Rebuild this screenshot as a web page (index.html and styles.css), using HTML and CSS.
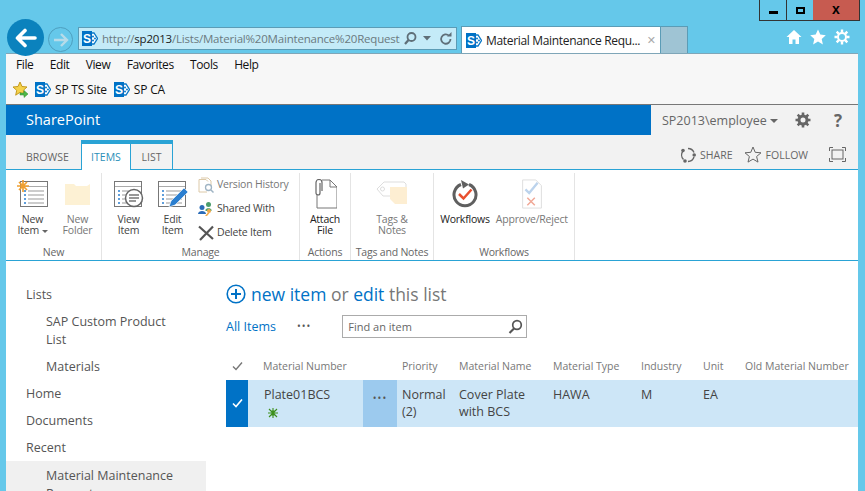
FILE: index.html
```html
<!DOCTYPE html>
<html lang="en">
<head>
    <meta charset="UTF-8">
    <meta name="viewport" content="width=device-width, initial-scale=1.0">
    <title>Material Maintenance Requests</title>
    <link rel="stylesheet" href="styles.css">
</head>
<body>
    <svg class="defs" width="0" height="0">
        <symbol id="sp" viewBox="0 0 16 17">
            <path d="M9 3h3l3.500 5.500L12 14H9z" fill="#fff" stroke="#0a78c8" stroke-width="1.300"/>
            <circle cx="11" cy="6.500" r="1" fill="#0a78c8"/><circle cx="13" cy="8.500" r="1" fill="#0a78c8"/><circle cx="11" cy="10.500" r="1" fill="#0a78c8"/>
            <rect x="0" y="1" width="10" height="15" fill="#0072c6"/>
            <text x="5" y="13" text-anchor="middle" font-family="Liberation Sans" font-weight="700" font-size="12" fill="#fff">S</text>
        </symbol>
        <symbol id="listdoc" viewBox="0 0 30 28">
            <rect x="1.500" y="1.500" width="27" height="25" fill="#fff" stroke="#777"/>
            <path d="M2 6.500h26" stroke="#aaa"/>
            <path d="M5 11h2M5 15h2M5 19h2M5 23h2" stroke="#2b7fd0" stroke-width="1.500"/>
            <path d="M9 11h16M9 15h16M9 19h16M9 23h16" stroke="#999"/>
        </symbol>
    </svg>

    <div class="window">
        <div class="titlebar">
            <div class="wincontrols">
                <div class="winbtn min"><span></span></div>
                <div class="winbtn max"><span></span></div>
                <div class="winbtn close">x</div>
            </div>
        </div>

        <div class="navbar">
            <div class="back">
                <svg width="24" height="20" viewBox="0 0 24 20"><path d="M21 10H4M11 2.500 3.500 10l7.500 7.500" fill="none" stroke="#fff" stroke-width="3.600" stroke-linecap="round" stroke-linejoin="round"/></svg>
            </div>
            <div class="forward">
                <svg width="16" height="14" viewBox="0 0 16 14"><path d="M1 7h13M8 1l6 6-6 6" fill="none" stroke="#b6dbe9" stroke-width="2.400"/></svg>
            </div>
            <div class="address">
                <svg class="favicon" width="16" height="17"><use href="#sp"/></svg>
                <div class="url">http://<b>sp2013</b>/Lists/Material%20Maintenance%20Requests/AllItems.aspx</div>
                <svg width="15" height="15" viewBox="0 0 15 15"><circle cx="8.500" cy="6" r="4" fill="none" stroke="#5f6f78" stroke-width="1.800"/><path d="M5.500 9 2 13" stroke="#5f6f78" stroke-width="2.200"/></svg>
                <svg class="caret" width="8" height="5" viewBox="0 0 8 5"><path d="M0 0h8L4 4.500z" fill="#5f6f78"/></svg>
                <svg width="14" height="14" viewBox="0 0 14 14"><path d="M11.500 7a4.700 4.700 0 1 1-1.500-3.400" fill="none" stroke="#5f6f78" stroke-width="1.800"/><path d="M8 4.500h4.500V0z" fill="#5f6f78"/></svg>
            </div>
            <div class="tab">
                <svg width="16" height="17"><use href="#sp"/></svg>
                <span class="tabtitle">Material Maintenance Requ...</span>
                <span class="tabclose">&#10005;</span>
            </div>
            <div class="newtab"></div>
            <div class="tools">
                <svg width="16" height="16" viewBox="0 0 16 16"><path d="M8 1 .5 8H3v7h3.500v-4.500h3V15H13V8h2.500z" fill="#fff"/></svg>
                <svg width="16" height="16" viewBox="0 0 16 16"><path d="m8 .5 2.300 5.100 5.500.6-4.100 3.700 1.200 5.500L8 12.600l-4.900 2.800 1.200-5.500L.2 6.200l5.500-.6z" fill="#fff"/></svg>
                <svg width="16" height="16" viewBox="0 0 16 16"><circle cx="8" cy="8" r="4" fill="none" stroke="#fff" stroke-width="2"/><path d="M8 .5v3M8 12.500v3M.5 8h3M12.500 8h3M2.700 2.700l2.100 2.100M11.200 11.200l2.100 2.100M2.700 13.300l2.100-2.100M11.200 4.800l2.100-2.100" stroke="#fff" stroke-width="2.400"/></svg>
            </div>
        </div>

        <div class="menus">
            <div class="menubar">
                <span>File</span><span>Edit</span><span>View</span><span>Favorites</span><span>Tools</span><span>Help</span>
            </div>
            <div class="favbar">
                <svg width="17" height="17" viewBox="0 0 17 17"><path d="m8 1 2 4.500 5 .5-3.700 3.300 1 4.900L8 11.300l-4.300 2.900 1-4.900L1 6l5-.5z" fill="#f5d24a" stroke="#c49a1f"/><path d="M8 12h4V9.500l4 3.500-4 3.500V14H8z" fill="#4eb848" stroke="#2f8a2c" stroke-width=".5"/></svg>
                <a class="fav"><svg width="16" height="17"><use href="#sp"/></svg>SP TS Site</a>
                <a class="fav"><svg width="16" height="17"><use href="#sp"/></svg>SP CA</a>
            </div>
        </div>

        <div class="suitebar">
            <div class="brand">SharePoint</div>
            <div class="suiteright">
                <span class="user">SP2013\employee <i class="arrow"></i></span>
                <svg width="16" height="16" viewBox="0 0 16 16"><circle cx="8" cy="8" r="4" fill="none" stroke="#666" stroke-width="3"/><path d="M8 .5v3M8 12.500v3M.5 8h3M12.500 8h3M2.700 2.700l2.100 2.100M11.200 11.200l2.100 2.100M2.700 13.300l2.100-2.100M11.200 4.800l2.100-2.100" stroke="#666" stroke-width="2.600"/></svg>
                <span class="help">?</span>
            </div>
        </div>

        <div class="ribbontabs">
            <span class="rtab plain">BROWSE</span>
            <span class="rtab active">ITEMS</span>
            <span class="rtab second">LIST</span>
            <div class="actions">
                <span class="action">
                    <svg width="16" height="16" viewBox="0 0 16 16"><path d="M8 1.500a6.500 6.500 0 0 1 6 4M14 10a6.500 6.500 0 0 1-6 4.500M3.500 12.500A6.500 6.500 0 0 1 3 4" fill="none" stroke="#666" stroke-width="1.400"/><circle cx="3" cy="3.500" r="1.800" fill="#666"/><circle cx="14.200" cy="8" r="1.800" fill="#666"/><circle cx="5" cy="14" r="1.800" fill="#666"/></svg>SHARE</span>
                <span class="action">
                    <svg width="18" height="17" viewBox="0 0 18 17"><path d="m9 1 2.200 5.300 5.800.5-4.400 3.700 1.400 5.600L9 13.100l-5 3 1.400-5.600L1 6.800l5.800-.5z" fill="none" stroke="#666"/></svg>FOLLOW</span>
                <svg class="focus" width="17" height="15" viewBox="0 0 17 15"><rect x="3" y="3" width="11" height="9" fill="none" stroke="#666"/><path d="M.5 4V.5H4M13 .5h3.500V4M16.500 11v3.500H13M4 14.500H.5V11" fill="none" stroke="#666"/></svg>
            </div>
        </div>

        <div class="ribbon">
            <div class="group group-new">
                <div class="tools-row">
                    <div class="bigbtn">
                        <svg width="32" height="28" viewBox="0 0 32 28"><use href="#listdoc" x="2" width="30" height="28"/><path d="M6 0v12M0 6h12M2 2l8 8M10 2l-8 8" stroke="#f0a030" stroke-width="1.700"/></svg>
                        <span>New<br>Item <i class="arrow small"></i></span>
                    </div>
                    <div class="bigbtn off">
                        <svg width="28" height="26" viewBox="0 0 28 26"><path d="M1 3h9l2 2h11l3-2v21H1z" fill="#fdf1d4"/></svg>
                        <span>New<br>Folder</span>
                    </div>
                </div>
                <div class="grouplabel">New</div>
            </div>
            <div class="group group-manage">
                <div class="tools-row">
                    <div class="bigbtn">
                        <svg width="32" height="28" viewBox="0 0 32 28"><use href="#listdoc" width="30" height="28"/><circle cx="21" cy="18" r="8.500" fill="#fff" stroke="#666" stroke-width="1.500"/><path d="M16 15h10M16 18h10M16 21h7" stroke="#777" stroke-width="1.300"/></svg>
                        <span>View<br>Item</span>
                    </div>
                    <div class="bigbtn">
                        <svg width="32" height="28" viewBox="0 0 32 28"><use href="#listdoc" width="30" height="28"/><path d="m12 27 2-6 13-13 4 4-13 13z" fill="#2b7fd0" stroke="#fff" stroke-width=".6"/></svg>
                        <span>Edit<br>Item</span>
                    </div>
                    <div class="smallbtns">
                        <div class="smallbtn off">
                            <svg width="16" height="16" viewBox="0 0 16 16"><path d="M1 2.500h7l2 2M3 1h7l3 3v5M1 2.500V15h8" fill="none" stroke="#dcc9a8"/><circle cx="10.500" cy="10.500" r="3" fill="#fff" stroke="#9fb4c4" stroke-width="1.300"/><path d="m13 13 2.500 2.500" stroke="#9fb4c4" stroke-width="1.500"/></svg>
                            Version History
                        </div>
                        <div class="smallbtn">
                            <svg width="16" height="16" viewBox="0 0 16 16"><circle cx="10.500" cy="3.500" r="2.500" fill="#4c9d6d"/><path d="M7.500 9c0-2.500 6-2.500 6 0v1h-6z" fill="#4c9d6d"/><circle cx="4" cy="6.500" r="2.500" fill="#2b6cb8"/><path d="M0 13c0-4 8-4 8 0z" fill="#2b6cb8"/><circle cx="11" cy="10" r="2" fill="#f0a94a"/><path d="M10 11.500 7 15h2l2.500-3z" fill="#f0a94a"/></svg>
                            Shared With
                        </div>
                        <div class="smallbtn">
                            <svg width="16" height="16" viewBox="0 0 16 16"><path d="M1 1.500 15 14M15 1.500 2 15" stroke="#555" stroke-width="2.200"/></svg>
                            Delete Item
                        </div>
                    </div>
                </div>
                <div class="grouplabel">Manage</div>
            </div>
            <div class="group group-actions">
                <div class="tools-row">
                    <div class="bigbtn">
                        <svg width="24" height="30" viewBox="0 0 24 30"><path d="M4 15v14h20V8l-7-7H9" fill="#fff" stroke="#777"/><path d="M17 1v7h7" fill="none" stroke="#777"/><path d="M7 4v10a2 2 0 0 1-4 0V3.500a3 3 0 0 1 6 0V12" fill="none" stroke="#666" stroke-width="1.200"/></svg>
                        <span class="dark">Attach<br>File</span>
                    </div>
                </div>
                <div class="grouplabel">Actions</div>
            </div>
            <div class="group group-tags">
                <div class="tools-row">
                    <div class="bigbtn off">
                        <svg width="32" height="28" viewBox="0 0 32 28"><path d="M1 9 8 2h20l2 2v9M1 9l6 7h8" fill="none" stroke="#ddd"/><circle cx="6.500" cy="9" r="2" fill="none" stroke="#ddd"/><path d="M14 7h17v17H19l-5-5z" fill="#fdeed2"/></svg>
                        <span>Tags &amp;<br>Notes</span>
                    </div>
                </div>
                <div class="grouplabel">Tags and Notes</div>
            </div>
            <div class="group group-flows">
                <div class="tools-row">
                    <div class="bigbtn wide">
                        <svg width="26" height="28" viewBox="0 0 26 28"><path d="M17 4.500a11 11 0 1 1-8 0" fill="none" stroke="#5f5f5f" stroke-width="3"/><path d="m9 0 8 4.500-6 4z" fill="#5f5f5f"/><path d="m7 14 4.500 4.500 8-9" fill="none" stroke="#e8502f" stroke-width="2.500"/></svg>
                        <span class="dark">Workflows</span>
                    </div>
                    <div class="bigbtn wide off">
                        <svg width="22" height="32" viewBox="0 0 22 32"><path d="M1 1h14l6 6v24H1z" fill="#fff" stroke="#ddd"/><path d="m4 11 4 4 9-11" fill="none" stroke="#bcd3ec" stroke-width="2.500"/><path d="m6 20 8 8M14 20l-8 8" stroke="#f0a897" stroke-width="1.600"/></svg>
                        <span>Approve/Reject</span>
                    </div>
                </div>
                <div class="grouplabel">Workflows</div>
            </div>
        </div>

        <div class="content">
            <nav class="sidenav">
                <a class="lnk">Lists</a>
                <a class="lnk sub">SAP Custom Product List</a>
                <a class="lnk sub">Materials</a>
                <a class="lnk">Home</a>
                <a class="lnk">Documents</a>
                <a class="lnk">Recent</a>
                <a class="lnk sub selected">Material Maintenance Requests</a>
            </nav>

            <main class="main">
                <div class="hero">
                    <svg width="20" height="20" viewBox="0 0 20 20"><circle cx="10" cy="10" r="8.800" fill="none" stroke="#0072c6" stroke-width="1.600"/><path d="M10 5v10M5 10h10" stroke="#0072c6" stroke-width="2"/></svg>
                    <span><span class="blue">new item</span> or <span class="blue">edit</span> this list</span>
                </div>
                <div class="viewbar">
                    <span class="view">All Items</span>
                    <span class="viewdots">&bull;&bull;&bull;</span>
                    <div class="search">
                        <span>Find an item</span>
                        <svg width="15" height="15" viewBox="0 0 15 15"><circle cx="9" cy="6" r="4.300" fill="none" stroke="#555" stroke-width="1.700"/><path d="M6 9.500 1.500 14" stroke="#555" stroke-width="2.200"/></svg>
                    </div>
                </div>
                <div class="row head">
                    <div class="c-check"><svg width="11" height="9" viewBox="0 0 11 9"><path d="m1 4.500 3 3 6-7" fill="none" stroke="#777" stroke-width="1.400"/></svg></div>
                    <div class="c-title">Material Number</div>
                    <div></div>
                    <div>Priority</div>
                    <div>Material Name</div>
                    <div>Material Type</div>
                    <div>Industry</div>
                    <div>Unit</div>
                    <div>Old Material Number</div>
                </div>
                <div class="row item">
                    <div class="c-check picked"><svg width="11" height="9" viewBox="0 0 11 9"><path d="m1 4.500 3 3 6-7" fill="none" stroke="#fff" stroke-width="1.600"/></svg></div>
                    <div class="c-title">Plate01BCS
                        <svg class="newmark" width="10" height="10" viewBox="0 0 10 10"><path d="M1 1l8 8M9 1l-8 8M5 0v10M0 5h10M2.500 3h5M2.500 7h5" stroke="#3d8f1c" stroke-width="1.100"/></svg>
                    </div>
                    <div class="c-dots">&bull;&bull;&bull;</div>
                    <div>Normal (2)</div>
                    <div>Cover Plate with BCS</div>
                    <div>HAWA</div>
                    <div>M</div>
                    <div>EA</div>
                    <div></div>
                </div>
            </main>
        </div>
    </div>
</body>
</html>
```

FILE: styles.css
```css
html, body {
    margin: 0;
    height: 100%;
    overflow: hidden;
}
body {
    font-family: "Open Sans", "Noto Sans", sans-serif;
    background-color: #65c8ea;
    color: #444;
}
svg {
    flex: none;
}
.defs {
    position: absolute;
}
.window {
    height: 491px;
    display: flex;
    flex-direction: column;
    overflow: hidden;
}

/* window chrome */
.titlebar {
    height: 20px;
    flex: none;
    display: flex;
    justify-content: flex-end;
    padding-right: 5px;
}
.wincontrols {
    display: flex;
    height: 21px;
    border: 1px solid #333;
    border-top: none;
    box-sizing: border-box;
}
.winbtn {
    display: flex;
    align-items: center;
    justify-content: center;
    box-sizing: border-box;
}
.winbtn.min {
    width: 27px;
    border-right: 1px solid #333;
}
.winbtn.min span {
    width: 9px;
    height: 3px;
    margin-top: 5px;
    background: #000;
}
.winbtn.max {
    width: 26px;
}
.winbtn.max span {
    width: 5px;
    height: 3px;
    border: 2px solid #000;
}
.winbtn.close {
    width: 46px;
    background: #c75b50;
    color: #000;
    font: bold 14px/14px "Liberation Sans", sans-serif;
    padding-bottom: 2px;
}
.navbar {
    height: 33px;
    flex: none;
    display: flex;
    align-items: flex-start;
    padding-left: 7px;
    position: relative;
    z-index: 2;
}
.back {
    width: 37px;
    height: 37px;
    margin-top: -1px;
    border-radius: 50%;
    background: #0b82bd;
    display: flex;
    align-items: center;
    justify-content: center;
    flex: none;
}
.forward {
    width: 23px;
    height: 23px;
    margin: 7px 0 0 4px;
    border: 1px solid #4e9fbf;
    border-radius: 50%;
    display: flex;
    align-items: center;
    justify-content: center;
    flex: none;
}
.address {
    width: 379px;
    height: 23px;
    margin: 7px 0 0 5px;
    box-sizing: border-box;
    border: 1px solid #5b9cb6;
    background: #c4ebf8;
    display: flex;
    align-items: center;
    padding: 0 3px;
    flex: none;
    gap: 3px;
}
.favicon {
    margin-right: 1px;
}
.url {
    width: 300px;
    overflow: hidden;
    white-space: nowrap;
    font-size: 11.500px;
    letter-spacing: -0.2px;
    color: #6b7a80;
}
.url b {
    font-weight: 400;
    color: #222;
}
.caret {
    margin: 0 5px 0 2px;
}
.tab {
    width: 200px;
    height: 27px;
    margin: 6px 0 0 4px;
    box-sizing: border-box;
    background: #fff;
    border: 1px solid #5b9cb6;
    border-bottom: none;
    display: flex;
    align-items: center;
    padding: 0 4px;
    gap: 4px;
    flex: none;
}
.tabtitle {
    font-size: 12px;
    letter-spacing: -0.33px;
    color: #222;
    white-space: nowrap;
}
.tabclose {
    font-size: 11px;
    font-weight: 700;
    color: #aaa;
    margin-left: auto;
    font-family: "DejaVu Sans", sans-serif;
}
.newtab {
    width: 27px;
    height: 27px;
    margin-top: 6px;
    box-sizing: border-box;
    background: #9fc4d4;
    border: 1px solid #5b9cb6;
    border-left: none;
    border-bottom: none;
    flex: none;
}
.tools {
    margin: 9px 0 0 auto;
    padding-right: 15px;
    display: flex;
    gap: 8px;
}

/* menu and favourites */
.menus {
    height: 52px;
    flex: none;
    margin: 0 7px 0 6px;
    background: #f7f7f7;
    border-top: 1px solid #7fa6b8;
    border-bottom: 1px solid #777;
    box-sizing: border-box;
}
.menubar {
    height: 20px;
    display: flex;
    align-items: center;
    gap: 16.300px;
    padding: 0 0 0 10px;
    font-size: 12px;
    letter-spacing: -0.4px;
    color: #111;
}
.favbar {
    height: 30px;
    display: flex;
    align-items: center;
    gap: 6px;
    padding-left: 6px;
    font-size: 12px;
    letter-spacing: -0.2px;
    color: #111;
}
.fav {
    display: flex;
    align-items: center;
    gap: 4px;
    margin-right: 1px;
}

/* suite bar */
.suitebar {
    height: 30px;
    flex: none;
    margin: 0 7px 0 6px;
    display: flex;
    background: #f2f2f2;
}
.brand {
    width: 625px;
    padding-left: 20px;
    background: #0072c6;
    color: #fff;
    font-size: 14.500px;
    line-height: 30px;
}
.suiteright {
    flex: 1;
    display: flex;
    align-items: center;
    padding-left: 11px;
    font-size: 12.500px;
    color: #666;
}
.user {
    white-space: nowrap;
    margin-right: 17px;
}
.arrow {
    display: inline-block;
    border: 4px solid transparent;
    border-top-color: #666;
    border-bottom: none;
    vertical-align: middle;
}
.arrow.small {
    border-width: 3px;
    border-bottom: none;
}
.help {
    margin-left: 23px;
    font: bold 17px "Open Sans", sans-serif;
    color: #666;
}

/* ribbon tabs */
.ribbontabs {
    height: 35px;
    flex: none;
    margin: 0 7px 0 6px;
    box-sizing: border-box;
    background: #f2f2f2;
    border-bottom: 1px solid #2aa3d5;
    display: flex;
    align-items: flex-end;
    padding-left: 20px;
    font-size: 10.500px;
    color: #666;
}
.rtab {
    height: 30px;
    box-sizing: border-box;
    display: flex;
    align-items: center;
    justify-content: center;
    margin-bottom: -1px;
}
.rtab.plain {
    width: 55px;
    justify-content: flex-start;
    padding-top: 3px;
}
.rtab.active {
    width: 50px;
    background: #fff;
    color: #2b8fb8;
    border: 1px solid #2aa3d5;
    border-top: 4px solid #2aa3d5;
    border-bottom: none;
}
.rtab.second {
    width: 42px;
    border: 1px solid #2aa3d5;
    border-left: none;
    border-top: 4px solid #2aa3d5;
    border-bottom: 1px solid #2aa3d5;
}
.actions {
    margin-left: auto;
    display: flex;
    align-items: center;
    height: 34px;
    box-sizing: border-box;
    padding: 5px 12px 0 0;
    gap: 11px;
}
.action {
    display: flex;
    align-items: center;
    gap: 4px;
}
.focus {
    margin-left: 10px;
}

/* ribbon */
.ribbon {
    height: 91px;
    flex: none;
    margin: 0 7px 0 6px;
    box-sizing: border-box;
    background: #fff;
    border-bottom: 1px solid #2aa3d5;
    display: flex;
    font-size: 10.500px;
    letter-spacing: -0.2px;
    line-height: 11px;
    color: #444;
}
.group {
    height: 87px;
    margin-top: 3px;
    box-sizing: border-box;
    border-right: 1px solid #e4e4e4;
    display: flex;
    flex-direction: column;
}
.group-new { width: 96px; }
.group-manage { width: 198px; }
.group-actions { width: 51px; }
.group-tags { width: 83px; }
.group-flows { width: 141px; }
.tools-row {
    flex: 1;
    display: flex;
    justify-content: center;
}
.group-new .tools-row { justify-content: flex-start; padding-left: 7px; gap: 6px; }
.group-manage .tools-row { justify-content: flex-start; padding-left: 7px; gap: 5px; }
.bigbtn {
    width: 39px;
    display: flex;
    flex-direction: column;
    align-items: center;
    text-align: center;
    padding-top: 6px;
    gap: 5px;
}
.bigbtn.wide {
    width: auto;
    padding: 6px 3px 0;
}
.bigbtn svg {
    height: 30px;
    flex: none;
}
.bigbtn.off {
    color: #777;
}
.bigbtn span.dark {
    color: #222;
}
.smallbtns {
    display: flex;
    flex-direction: column;
    gap: 3px;
    padding-top: 1px;
    margin-left: 1px;
}
.smallbtn {
    height: 21px;
    display: flex;
    align-items: center;
    gap: 3px;
    white-space: nowrap;
}
.smallbtn.off {
    color: #777;
}
.grouplabel {
    height: 15px;
    line-height: 15px;
    text-align: center;
    color: #666;
    white-space: nowrap;
}

/* page */
.content {
    flex: 1;
    margin: 0 7px 0 6px;
    background: #fff;
    display: flex;
    min-height: 0;
}
.sidenav {
    width: 200px;
    flex: none;
    padding-top: 25px;
    font-size: 12.500px;
    line-height: 18px;
    color: #555;
}
.lnk {
    display: block;
    padding: 0 20px 9px;
}
.lnk.sub {
    padding-left: 40px;
}
.lnk.selected {
    background: #f0f0f0;
    padding-top: 6px;
    margin-top: -5px;
}
.main {
    padding: 21px 0 0 20px;
    flex: 1;
    min-width: 0;
}
.hero {
    display: flex;
    align-items: center;
    gap: 5px;
    font-size: 17.500px;
    line-height: 24px;
    color: #777;
    white-space: pre;
}
.blue {
    color: #0072c6;
}
.viewbar {
    display: flex;
    align-items: center;
    margin-top: 8px;
    height: 24px;
    font-size: 12.500px;
}
.view {
    color: #0072c6;
}
.viewdots {
    margin-left: 21px;
    font-size: 10px;
    letter-spacing: 1px;
    color: #555;
}
.search {
    margin-left: 31px;
    width: 185px;
    height: 23px;
    box-sizing: border-box;
    border: 1px solid #ababab;
    display: flex;
    align-items: center;
    justify-content: space-between;
    padding: 0 3px 0 5px;
    font-size: 11px;
    color: #666;
}
.row {
    display: grid;
    grid-template-columns: 22px 115px 34px 57px 94px 88px 62px 42px 118px;
    font-size: 10.500px;
    color: #777;
}
.row > div {
    padding-left: 5px;
    box-sizing: border-box;
}
.row .c-title {
    padding-left: 15px;
}
.row .c-check {
    padding-left: 0;
    display: flex;
    align-items: center;
    justify-content: center;
}
.head {
    margin-top: 15px;
    height: 27px;
    line-height: 26px;
}
.item {
    height: 47px;
    background: #cde6f7;
    color: #444;
    font-size: 12.500px;
    line-height: 17px;
}
.item > div {
    padding-top: 6px;
}
.item .c-title {
    padding-left: 16px;
}
.item .c-check.picked {
    padding-top: 0;
    background: #0072c6;
}
.newmark {
    display: block;
    margin: 5px 0 0 4px;
}
.item .c-dots {
    background: #9ccaee;
    text-align: center;
    padding: 10px 0 0;
    font-size: 10px;
    letter-spacing: 1px;
    color: #555;
}
```
